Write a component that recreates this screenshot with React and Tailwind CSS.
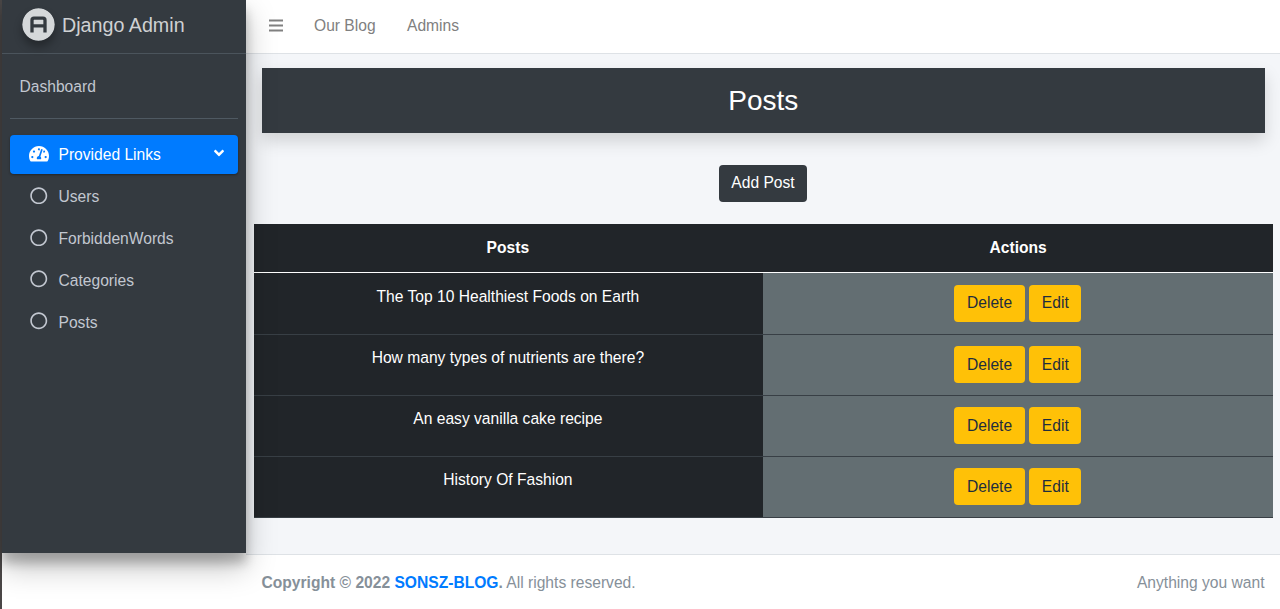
import { FaTachometerAlt, FaRegCircle, FaAngleDown } from "react-icons/fa";

const links = ["Users", "ForbiddenWords", "Categories", "Posts"];
const posts = [
  "The Top 10 Healthiest Foods on Earth",
  "How many types of nutrients are there?",
  "An easy vanilla cake recipe",
  "History Of Fashion",
];

function Logo() {
  return (
    <svg viewBox="0 0 33 33" className="h-[33px] w-[33px] shrink-0 rounded-full shadow-[0_6px_8px_rgba(0,0,0,0.3)]">
      <circle cx="16.5" cy="16.5" r="16.2" fill="#d5d8da" />
      <path
        d="M10 24.6V12.2Q10 10.2 12 10.2H21Q23 10.2 23 12.2V24.6M10 17.8H23"
        fill="none"
        stroke="#343a40"
        strokeWidth="3.3"
      />
    </svg>
  );
}

function MenuIcon() {
  return (
    <svg viewBox="0 0 14 13" className="h-[13px] w-[14px]" stroke="currentColor" strokeWidth="2.2">
      <path d="M0 1.5H14M0 6.5H14M0 11.5H14" />
    </svg>
  );
}

function Sidebar() {
  return (
    <aside className="relative z-10 h-[553px] w-[244px] shrink-0 bg-[#343a40] text-[#c2c7d0] shadow-[0_14px_28px_rgba(0,0,0,0.25),0_10px_10px_rgba(0,0,0,0.22)]">
      <div className="flex h-[53.5px] items-start gap-[7px] border-b border-[#4b545c] pl-5 pt-[7.5px]">
        <Logo />
        <span className="pt-[3px] text-[19.7px] leading-[29px] text-[#cfd1d3]">Django Admin</span>
      </div>
      <div className="mx-2 flex h-[65.5px] items-center border-b border-[#4f5962] pl-[9.5px] pt-[1px]">Dashboard</div>
      <nav className="mx-2 mt-[15.5px] flex flex-col gap-[3px]">
        <a className="flex h-[39px] items-center rounded-[4px] bg-[#007bff] pl-[19px] text-white shadow-[0_1px_3px_rgba(0,0,0,0.12),0_1px_2px_rgba(0,0,0,0.24)]">
          <FaTachometerAlt className="mb-[1px] h-[19.5px] w-5" />
          <span className="ml-[9.5px] pt-[1px]">Provided Links</span>
          <FaAngleDown className="mb-[3px] ml-auto mr-[11px] h-4 w-4" />
        </a>
        {links.map((link) => (
          <a key={link} className="flex h-[38.9px] items-center pl-5">
            <FaRegCircle className="mb-[1px] h-[17.5px] w-[17.5px]" />
            <span className="ml-[11px] pt-[1.6px]">{link}</span>
          </a>
        ))}
      </nav>
    </aside>
  );
}

function WarningButton({ children }) {
  return <button className="h-[37px] rounded-[4px] bg-[#ffc107] px-[12.6px] text-[#1f2d3d]">{children}</button>;
}

export default function App() {
  return (
    <div className="flex h-[609px] w-[1280px] overflow-hidden bg-white font-['Liberation_Sans',Arial,sans-serif] text-[15.62px] leading-[23.4px]">
      <div className="w-[2px] shrink-0 bg-[#4a4747]" />
      <Sidebar />
      <div className="flex min-w-0 flex-1 flex-col">
        <header className="flex h-[53.5px] shrink-0 items-center border-b border-[#dee2e6] bg-white pb-[1px] pl-[23px] text-[#808080]">
          <MenuIcon />
          <span className="ml-[31px]">Our Blog</span>
          <span className="ml-[31.4px]">Admins</span>
        </header>
        <main className="flex h-[500px] shrink-0 flex-col items-center bg-[#f4f6f9] pt-[14.8px]">
          <h1 className="ml-[15.5px] mr-[15px] flex h-[65.2px] items-center justify-center self-stretch bg-[#343a40] text-[28px] text-white shadow-[0_8px_16px_rgba(0,0,0,0.15)]">
            Posts
          </h1>
          <button className="mt-[31.3px] h-[37px] rounded-[4px] bg-[#343a40] px-3 pb-[1px] text-white">Add Post</button>
          <div className="ml-[7.5px] mr-[7px] mt-[22.2px] self-stretch text-center text-white">
            <div className="grid h-[49.4px] grid-cols-2 items-center border-b border-white bg-[#212529] font-bold">
              <span className="pr-[1px]">Posts</span>
              <span>Actions</span>
            </div>
            {posts.map((post) => (
              <div key={post} className="grid h-[61.2px] grid-cols-2 border-b border-[#383f45] bg-[#212529]">
                <div className="pr-[1px] pt-[11.5px]">{post}</div>
                <div className="flex items-start justify-center gap-[4.5px] bg-[#636e72] pr-[0.5px] pt-[11.2px]">
                  <WarningButton>Delete</WarningButton>
                  <WarningButton>Edit</WarningButton>
                </div>
              </div>
            ))}
          </div>
        </main>
        <footer className="flex flex-1 items-center justify-between border-t border-[#dee2e6] bg-white px-[15.5px] pt-[1px] text-[#869099]">
          <div>
            <b>
              Copyright © 2022 <span className="text-[#007bff]">SONSZ-BLOG</span>.
            </b>{" "}
            All rights reserved.
          </div>
          <div>Anything you want</div>
        </footer>
      </div>
    </div>
  );
}
